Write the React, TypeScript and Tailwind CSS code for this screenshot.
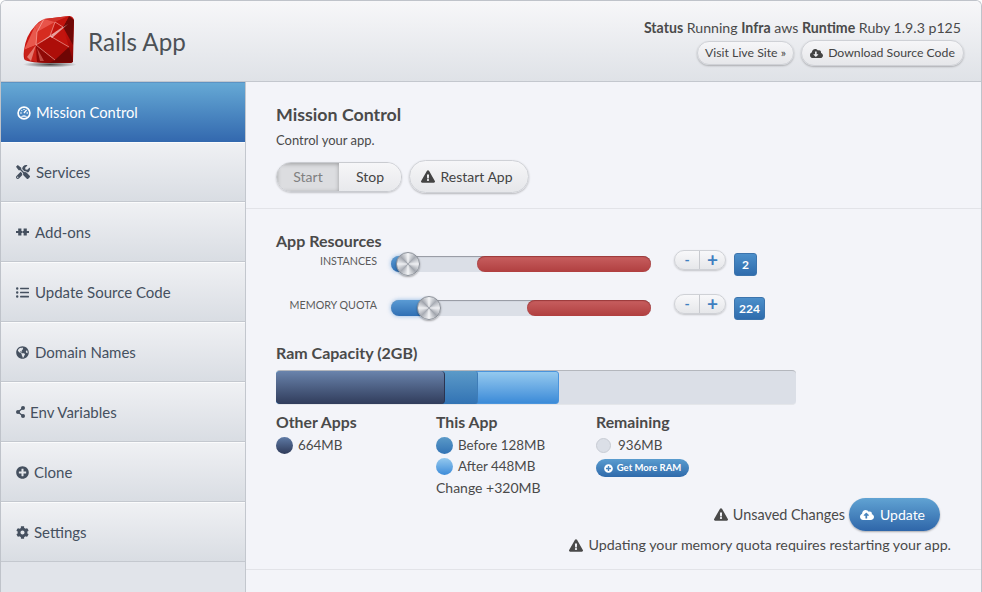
import React from "react";
import { FaTools, FaListUl, FaGlobeAmericas, FaPlusCircle, FaCog, FaExclamationTriangle, FaCloudUploadAlt, FaCloudDownloadAlt } from "react-icons/fa";

function Ruby() {
  return (
    <svg width="54" height="54" viewBox="0 0 54 54" className="block">
      <defs>
        <linearGradient id="rb" x1="0.2" y1="0" x2="0.8" y2="1">
          <stop offset="0" stopColor="#d4201a" />
          <stop offset="0.55" stopColor="#c2100c" />
          <stop offset="1" stopColor="#8a0604" />
        </linearGradient>
        <radialGradient id="sh" cx="0.5" cy="0.5" r="0.5">
          <stop offset="0" stopColor="#222" stopOpacity="0.8" />
          <stop offset="1" stopColor="#222" stopOpacity="0" />
        </radialGradient>
      </defs>
      <ellipse cx="28" cy="49.5" rx="27" ry="3" fill="url(#sh)" />
      <path d="M22 4 L47 1 Q51 1 52 5 L51 46 Q51 48 48 48 L27 48 Q9 48 3 45 Q1 43 2 35 Q4 20 13 11 Q17 6 22 4Z" fill="url(#rb)" />
      <path d="M47 1 L52 5 L51 30 L41 12Z" fill="#6f0806" />
      <path d="M22 4 L47 1 L33 7Z" fill="#d03028" />
      <path d="M33 7 L47 1 L41 12 L47 32 L28 21Z" fill="#c2140e" />
      <path d="M28 21 L47 32 L33 45 L14 30Z" fill="#ad0e09" />
      <path d="M14 30 L28 21 L33 7 L15 17Z" fill="#d62c20" />
      <path d="M13 11 L22 4 L33 7 L15 17Z" fill="#e8544a" />
      <path d="M2 35 L13 11 L15 17 L14 30Z" fill="#e8584c" />
      <path d="M3 45 L2 35 L14 30 L15 47Z" fill="#c9231a" />
      <path d="M14 30 L33 45 L27 48 L15 47Z" fill="#8f0906" />
      <path d="M47 32 L51 47 L27 48 L33 45Z" fill="#6f0604" />
      <path d="M28 21 L33 7 M14 30 L28 21 L47 32 M14 30 L33 45 M15 17 L14 30 M28 21 L41 12 M22 4 L15 17 M33 7 L41 12" stroke="#ffc4bc" strokeWidth="0.8" opacity="0.7" fill="none" />
      <path d="M28 21 L15 30 L31 20Z M28 21 L46 9 L30 23Z" fill="#fff" opacity="0.6" />
      <path d="M5 42 L14 30 L9 46Z" fill="#f6b0a6" opacity="0.6" />
      <path d="M18 46 L15 33 L22 46Z" fill="#f08a80" opacity="0.5" />
    </svg>
  );
}

function Gauge({ className = "" }: { className?: string }) {
  return (
    <svg viewBox="0 0 14 14" className={className}>
      <circle cx="7" cy="7" r="5.9" fill="none" stroke="currentColor" strokeWidth="1.7" />
      <path d="M7 7 L9.6 3.8 M3.4 7h1.2 M9.6 7h1.2 M4.4 4.2l.7.7 M7 3v1" stroke="currentColor" strokeWidth="1.3" fill="none" />
      <path d="M3.5 10.8 Q7 7.6 10.5 10.8 Z" fill="currentColor" />
    </svg>
  );
}

function Plug({ className = "" }: { className?: string }) {
  return (
    <svg viewBox="0 0 13 8" className={className}>
      <path fill="currentColor" d="M0 3h2.2V.6h3.2V3h.9v2h-.9v2.4H2.2V5H0zM7.6 .6h3.2V3H13v2h-2.2v2.4H7.6V5h-.9V3h.9z" />
    </svg>
  );
}

function Share({ className = "" }: { className?: string }) {
  return (
    <svg viewBox="0 0 9 12" className={className}>
      <path d="M7 2 L2 6 L7 10" fill="none" stroke="currentColor" strokeWidth="1.3" />
      <circle cx="7" cy="2" r="2" fill="currentColor" />
      <circle cx="2" cy="6" r="2" fill="currentColor" />
      <circle cx="7" cy="10" r="2" fill="currentColor" />
    </svg>
  );
}

const nav: { label: string; icon: React.ReactNode; gap: string }[] = [
  { label: "Services", icon: <FaTools className="w-[14px] h-[14px]" />, gap: "gap-[6px]" },
  { label: "Add-ons", icon: <Plug className="w-[13px] h-[8px]" />, gap: "gap-[6px]" },
  { label: "Update Source Code", icon: <FaListUl className="w-[13px] h-[13px]" />, gap: "gap-[6px]" },
  { label: "Domain Names", icon: <FaGlobeAmericas className="w-[13px] h-[13px]" />, gap: "gap-[6px]" },
  { label: "Env Variables", icon: <Share className="w-[9px] h-[12px]" />, gap: "gap-[5px]" },
  { label: "Clone", icon: <FaPlusCircle className="w-[13px] h-[13px]" />, gap: "gap-[5px]" },
  { label: "Settings", icon: <FaCog className="w-[13px] h-[13px]" />, gap: "gap-[5px]" },
];

function Slider({ fill, red }: { fill: number; red: number }) {
  return (
    <div className="relative w-[260px] h-[16px] ml-[14px] mt-[3px] rounded-full bg-[#dbdfe7] shadow-[inset_0_1px_1px_rgba(60,60,70,0.45)]">
      <div
        className="absolute left-0 top-0 h-[16px] rounded-l-full bg-gradient-to-b from-[#5a9bd4] to-[#2f6fb4] shadow-[0_0_4px_rgba(70,140,210,0.6)]"
        style={{ width: fill }}
      />
      <div
        className="absolute right-0 top-0 h-[16px] rounded-full bg-gradient-to-b from-[#c85f60] to-[#b03f40] shadow-[inset_0_1px_1px_rgba(110,20,20,0.5)]"
        style={{ width: red }}
      />
      <div
        className="absolute top-[-4px] w-[24px] h-[24px] rounded-full border border-[#8e939b] bg-[conic-gradient(#f4f5f7,#a8acb4,#eff0f3,#a2a6ae,#f4f5f7,#a8acb4,#eff0f3,#a2a6ae,#f4f5f7)] shadow-[0_1px_2px_rgba(0,0,0,0.35)]"
        style={{ left: fill - 12 }}
      />
    </div>
  );
}

function Stepper() {
  return (
    <div className="flex w-[52px] h-[20px] rounded-full border border-[#cfd1d6] bg-gradient-to-b from-[#f8f8fa] to-[#e6e7ea] shadow-[0_1px_2px_rgba(0,0,0,0.2)] text-[#3f7fc0] font-bold">
      <div className="w-[25px] flex items-center justify-center text-[14px] leading-none border-r border-[#c8cacf]">-</div>
      <div className="flex-1 flex items-center justify-center text-[19px] leading-none pb-[2px]">+</div>
    </div>
  );
}

function Badge({ children, w }: { children: React.ReactNode; w: string }) {
  return (
    <div className={`${w} h-[23px] flex items-center justify-center rounded-[3px] border border-[#3c74ad] bg-gradient-to-b from-[#4c8fca] to-[#2f6cad] text-white text-[12px] font-bold`}>
      {children}
    </div>
  );
}

function Dot({ cls }: { cls: string }) {
  return <span className={`inline-block w-[17px] h-[17px] rounded-full ${cls}`} />;
}

const pill = "rounded-full border border-[#cfd1d6] bg-gradient-to-b from-[#f6f6f8] to-[#e6e7ea] shadow-[0_1px_2px_rgba(0,0,0,0.25)]";
const legendHead = "text-[15.8px] leading-[20px] font-bold";
const legendRow = "flex items-center gap-[5px] text-[13.4px] leading-[21px]";

export default function App() {
  return (
    <div className="w-[982px] h-[592px] overflow-hidden bg-[#f3f4f9] text-[#4a4a4a] font-['Lato','Open_Sans',sans-serif] flex flex-col rounded-t-[6px] border border-b-0 border-[#bfc3ca]">
      <header className="h-[81px] shrink-0 flex justify-between bg-gradient-to-b from-[#f7f7f9] to-[#dfe2e7] border-b border-[#c3c7ce]">
        <div className="flex items-center pl-[21px] pt-[1px]">
          <Ruby />
          <h1 className="ml-[12px] text-[24.2px] leading-none text-[#4c5156] font-normal pt-[2px]">Rails App</h1>
        </div>
        <div className="flex flex-col items-end pr-[20px] pt-[19px]">
          <div className="text-[14.15px] leading-[16px] text-[#4a4a4a] whitespace-nowrap">
            <b>Status</b> Running <b>Infra</b> aws <b>Runtime</b> Ruby 1.9.3 p125
          </div>
          <div className="flex items-center gap-[7px] mt-[4px] mr-[-3px]">
            <div className={`${pill} h-[24px] w-[97px] flex items-center justify-center text-[12.3px] text-[#444]`}>Visit Live Site »</div>
            <div className={`${pill} h-[26px] w-[163px] flex items-center justify-center gap-[5px] text-[12.25px] text-[#444]`}>
              <FaCloudDownloadAlt className="w-[13px] h-[13px]" />Download Source Code
            </div>
          </div>
        </div>
      </header>
      <div className="flex flex-1 min-h-0">
        <aside className="w-[245px] shrink-0 bg-[#e1e4ea] border-r border-[#c3c7ce]">
          <div className="h-[60px] flex items-center gap-[5px] pl-[16px] bg-gradient-to-b from-[#66a9d5] to-[#3368ae] border-t border-[#5c93c4] text-white text-[14.7px]">
            <Gauge className="w-[14px] h-[14px]" />Mission Control
          </div>
          {nav.map((n) => (
            <div key={n.label} className={`h-[60px] flex items-center ${n.gap} pl-[15px] pt-[1px] bg-gradient-to-b from-[#f0f1f4] to-[#d9dde3] border-b border-[#c4c8cf] shadow-[inset_0_1px_0_#fbfbfc] text-[15px] text-[#45505f]`}>
              {n.icon}{n.label}
            </div>
          ))}
        </aside>
        <main className="flex-1 min-w-0">
          <section className="h-[127px] pl-[30px] pt-[22px] border-b border-[#e2e3e8]">
            <h2 className="text-[17.8px] leading-[20px] font-bold text-[#4a4a4a]">Mission Control</h2>
            <p className="text-[13px] leading-[16px] mt-[8px] text-[#4a4a4a]">Control your app.</p>
            <div className="flex gap-[7px] mt-[12px] h-[33px] items-center">
              <div className="flex w-[126px] h-[30px] rounded-full border border-[#c9cbd0] shadow-[0_1px_2px_rgba(0,0,0,0.2)] overflow-hidden text-[14px]">
                <div className="w-[62px] flex items-center justify-center bg-[#dcdde0] shadow-[inset_0_1px_4px_rgba(0,0,0,0.3)] text-[#808080]">Start</div>
                <div className="flex-1 flex items-center justify-center bg-gradient-to-b from-[#f6f6f8] to-[#e8e9ec] text-[#444]">Stop</div>
              </div>
              <div className={`${pill} w-[120px] h-[33px] flex items-center justify-center gap-[5px] pr-[4px] text-[14px] text-[#444]`}>
                <FaExclamationTriangle className="w-[14px] h-[13px]" />Restart App
              </div>
            </div>
          </section>
          <section className="h-[361px] pl-[30px] pt-[23px] border-b border-[#e2e3e8]">
            <h3 className="text-[16px] leading-[18px] font-bold">App Resources</h3>
            <div className="flex items-start mt-[3px] h-[44px]">
              <div className="w-[101px] text-right text-[10.7px] leading-[14px] text-[#5a5a5a] pt-[1px]">INSTANCES</div>
              <Slider fill={17} red={174} />
              <div className="ml-[23px] mt-[-3px]"><Stepper /></div>
              <div className="ml-[8px]"><Badge w="w-[23px]">2</Badge></div>
            </div>
            <div className="flex items-start h-[42px]">
              <div className="w-[101px] text-right text-[10.7px] leading-[14px] text-[#5a5a5a] pt-[1px]">MEMORY QUOTA</div>
              <Slider fill={38} red={124} />
              <div className="ml-[23px] mt-[-3px]"><Stepper /></div>
              <div className="ml-[8px]"><Badge w="w-[31px]">224</Badge></div>
            </div>
            <h3 className="text-[16px] leading-[18px] font-bold mt-[5px]">Ram Capacity (2GB)</h3>
            <div className="relative w-[520px] h-[35px] mt-[8px] rounded-[4px] bg-[#dbdfe7] border-t border-[#b4b7bd] border-b border-b-[#e4e6ea] overflow-hidden">
              <div className="absolute left-0 top-0 bottom-0 w-[283px] rounded-[3px] border border-[#4a94dc] bg-gradient-to-b from-[#94c9ee] to-[#3b8bd8]" />
              <div className="absolute left-0 top-0 bottom-0 w-[202px] rounded-[3px] border-r border-[#3f7db8] bg-gradient-to-b from-[#5b9ac8] to-[#3273b4]" />
              <div className="absolute left-0 top-0 bottom-0 w-[169px] rounded-[4px] border-r border-[#2b3450] bg-gradient-to-b from-[#6a84ac] to-[#313d5c]" />
            </div>
            <div className="flex mt-[7px]">
              <div className="w-[160px]">
                <div className={legendHead}>Other Apps</div>
                <div className={`${legendRow} mt-[3px]`}><Dot cls="bg-gradient-to-b from-[#5f7ba6] to-[#2f3b5a]" />664MB</div>
              </div>
              <div className="w-[160px]">
                <div className={legendHead}>This App</div>
                <div className={`${legendRow} mt-[3px]`}><Dot cls="bg-gradient-to-b from-[#5b9ac8] to-[#3273b4]" />Before 128MB</div>
                <div className={legendRow}><Dot cls="bg-gradient-to-b from-[#94c9ee] to-[#3b8bd8]" />After 448MB</div>
                <div className="text-[14px] leading-[21px]">Change +320MB</div>
              </div>
              <div>
                <div className={legendHead}>Remaining</div>
                <div className={`${legendRow} mt-[3px]`}><span className="inline-block w-[15px] h-[15px] mr-[2px] rounded-full bg-[#dbdfe7] border border-[#c8ccd4]" />936MB</div>
                <div className="mt-[3px] w-[93px] h-[18px] rounded-full bg-gradient-to-b from-[#5a9ccf] to-[#2f6aab] text-white text-[9.5px] font-bold flex items-center justify-center gap-[4px]">
                  <FaPlusCircle className="w-[9px] h-[9px]" />Get More RAM
                </div>
              </div>
            </div>
            <div className="flex items-center justify-end gap-[4px] pr-[41px] mt-[0px] text-[14.4px]">
              <FaExclamationTriangle className="w-[14px] h-[13px]" />
              <span className="ml-[1px]">Unsaved Changes</span>
              <div className="w-[91px] h-[33px] rounded-full bg-gradient-to-b from-[#61a3d3] to-[#2f66a9] text-white text-[14px] flex items-center justify-center gap-[6px] pr-[4px] shadow-[0_1px_2px_rgba(0,0,0,0.3)]">
                <FaCloudUploadAlt className="w-[14px] h-[14px]" />Update
              </div>
            </div>
            <div className="flex items-center justify-end gap-[6px] pr-[30px] mt-[4px] text-[14.25px] leading-[20px]">
              <FaExclamationTriangle className="w-[14px] h-[13px]" />Updating your memory quota requires restarting your app.
            </div>
          </section>
        </main>
      </div>
    </div>
  );
}
